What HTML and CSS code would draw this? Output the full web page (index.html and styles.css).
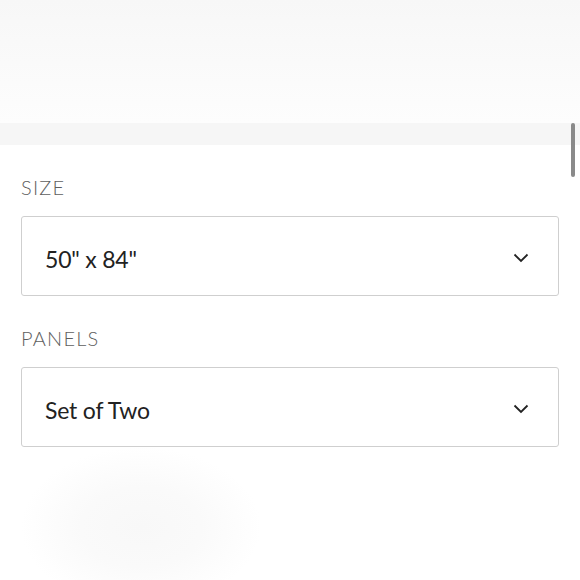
FILE: index.html
```html
<!DOCTYPE html>
<html>
<head>
<meta charset="utf-8">
<link rel="stylesheet" href="styles.css">
</head>
<body>
<div class="hero"></div>
<div class="band"></div>
<div class="options">
  <div class="field">
    <div class="label">SIZE</div>
    <div class="select">
      <span class="value">50" x 84"</span>
      <svg class="chev" width="16" height="10" viewBox="0 0 16 10"><path d="M1.5 1.5 L8 8 L14.5 1.5" fill="none" stroke="#222" stroke-width="1.8"/></svg>
    </div>
  </div>
  <div class="field">
    <div class="label">PANELS</div>
    <div class="select">
      <span class="value">Set of Two</span>
      <svg class="chev" width="16" height="10" viewBox="0 0 16 10"><path d="M1.5 1.5 L8 8 L14.5 1.5" fill="none" stroke="#222" stroke-width="1.8"/></svg>
    </div>
  </div>
  <div class="ghost"></div>
</div>
<div class="scrollbar"></div>
</body>
</html>
```
FILE: styles.css
```css
html, body { margin: 0; padding: 0; }
body {
  width: 580px; height: 580px; overflow: hidden; background: #fff;
  font-family: "Lato", "Open Sans", sans-serif;
  position: relative;
}
.hero {
  height: 123px;
  background: linear-gradient(180deg, #f7f7f7 0%, #fafafa 50%, #fdfdfd 100%);
}
.band { height: 22px; background: #f6f6f6; }
.options {
  padding: 30px 21px 0 21px;
  display: flex; flex-direction: column; gap: 30px;
}
.field { display: flex; flex-direction: column; gap: 17px; }
.label {
  font-size: 20px; line-height: 24px; color: #5e5e5e;
  font-weight: 300; letter-spacing: 1.2px;
}
.select {
  height: 78px; border: 1px solid #cfcfcf; border-radius: 3px;
  display: flex; align-items: center; justify-content: space-between;
  padding: 0 29px 0 23px;
}
.value { font-size: 23px; color: #222; position: relative; top: 3px; letter-spacing: -0.2px; }
.chev { position: relative; top: 2px; }
.ghost {
  margin: -30px 0 0 0; width: 240px; height: 160px;
  background: radial-gradient(closest-side, #f8f8f8 0%, #fafafa 50%, rgba(255,255,255,0) 100%);
}
.scrollbar {
  position: absolute; left: 571px; top: 123px; width: 4px; height: 54px;
  background: #8a8a8a; border-radius: 2px;
}
```
